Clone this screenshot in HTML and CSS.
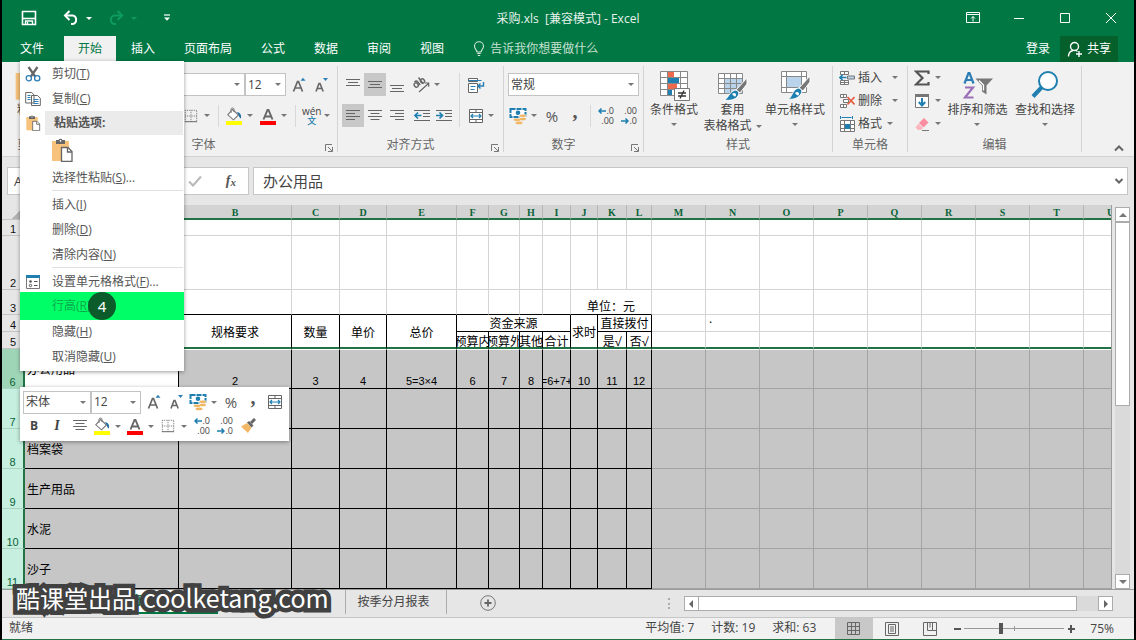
FILE: index.html
```html
<!DOCTYPE html>
<html lang="zh-CN">
<head>
<meta charset="utf-8">
<title>采购.xls [兼容模式] - Excel</title>
<link rel="stylesheet" href="styles.css">
</head>
<body>
<svg class="defs" aria-hidden="true">
  <symbol id="save" viewBox="0 0 16 16"><path d="M1.5 1.5h13v13h-13z" fill="none" stroke="#fff" stroke-width="1.6"/><path d="M1.5 8.5h13" stroke="#fff" stroke-width="1.6"/><path d="M4.5 15v-4h7v4M6.5 12v2.500" fill="none" stroke="#fff" stroke-width="1.4"/></symbol>
  <symbol id="undo" viewBox="0 0 16 16"><path d="M2 5.500h7.500a4.300 4.300 0 0 1 0 8.500H8" fill="none" stroke="currentColor" stroke-width="2"/><path d="M6.500 1 2 5.500 6.500 10" fill="none" stroke="currentColor" stroke-width="2"/></symbol>
  <symbol id="redo" viewBox="0 0 16 16"><path d="M14 5.500H6.500a4.300 4.300 0 0 0 0 8.500H8" fill="none" stroke="currentColor" stroke-width="2"/><path d="M9.500 1 14 5.500 9.500 10" fill="none" stroke="currentColor" stroke-width="2"/></symbol>
  <symbol id="custom" viewBox="0 0 8 8"><path d="M1 1h6" stroke="#fff" stroke-width="1.2"/><path d="M1 3.500h6L4 6.800z" fill="#fff"/></symbol>
  <symbol id="ribbonopt" viewBox="0 0 14 12"><path d="M.5.5h13v10H.5zM.5 2.500h13M7 9.500v-5M5 6.500l2-2 2 2" fill="none" stroke="#fff"/></symbol>
  <symbol id="min" viewBox="0 0 12 12"><path d="M1 6.500h10" stroke="#fff"/></symbol>
  <symbol id="max" viewBox="0 0 12 12"><path d="M1.500 1.500h9v9h-9z" fill="none" stroke="#fff"/></symbol>
  <symbol id="close" viewBox="0 0 12 12"><path d="m1 1 10 10M11 1 1 11" stroke="#fff"/></symbol>
  <symbol id="bulb" viewBox="0 0 12 16"><path d="M4 11c0-2.200-2.500-2.800-2.500-5.800a4.500 4.500 0 0 1 9 0C10.500 8.200 8 8.800 8 11zM4.300 12.500h3.400M4.800 14.500h2.400" fill="none" stroke="#d5eadd" stroke-width="1.100"/></symbol>
  <symbol id="person" viewBox="0 0 16 16"><circle cx="7.500" cy="5.500" r="4" fill="none" stroke="#fff" stroke-width="1.400"/><path d="M1.500 15.500c0-3.500 2-5.500 4.500-6M9 9.500l1.500 1M12 10v6M9 13h6" fill="none" stroke="#fff" stroke-width="1.400"/></symbol>
  <symbol id="paste" viewBox="0 0 22 24"><path d="M1 3h17v20H1z" fill="#f7c27c"/><path d="M5 2h2.500a2.300 2.300 0 0 1 4 0H14v4H5z" fill="#666"/><circle cx="9.500" cy="2.800" r=".9" fill="#fff"/><path d="M10.500 9.500h6.500l4 4v10H10.500z" fill="#fff" stroke="#666" stroke-width="1.300"/><path d="M16.500 9.500v4.500H21" fill="none" stroke="#666" stroke-width="1.300"/></symbol>
  <symbol id="cut" viewBox="0 0 16 16"><path d="M3.500 1 10.500 11M12.500 1 5.500 11" stroke="#666" stroke-width="2.200"/><circle cx="3.800" cy="12.300" r="2.600" fill="#fff" stroke="#2b7db5" stroke-width="1.300"/><circle cx="12.200" cy="12.300" r="2.600" fill="#fff" stroke="#2b7db5" stroke-width="1.300"/></symbol>
  <symbol id="copy" viewBox="0 0 16 16"><path d="M.700 1.500h6L9 3.800V12H.7zM6.500 4.500h6l2.800 2.800v7.200H6.500z" fill="#fff" stroke="#666"/><path d="M2.500 4.500h3M2.500 6.500h3M2.500 8.500h3M8.500 8.500h5M8.500 10.500h5M8.500 12.500h5" stroke="#2b7db5"/></symbol>
  <symbol id="fmtcells" viewBox="0 0 16 16"><path d="M1.500 1.500h13v13h-13z" fill="#fff" stroke="#777"/><path d="M1 1h14v3H1z" fill="#1e7fb0"/><path d="M9 7.500h3.500M9 11.500h3.500" stroke="#555"/><circle cx="5.500" cy="7.500" r="1.300" fill="#555"/><circle cx="5.500" cy="11.500" r="1.200" fill="none" stroke="#555"/></symbol>
  <symbol id="grow" viewBox="0 0 16 16"><path d="M1.500 14.500 5.500 4.500h1l4 10M3 11h6" fill="none" stroke="#666" stroke-width="1.700"/><path d="m8.500 3.800 2.500-3 2.500 3z" fill="#2b7db5"/></symbol>
  <symbol id="shrink" viewBox="0 0 16 16"><path d="M2 14.500 5 6.500h1l3.200 8M3.200 11.500h4.600" fill="none" stroke="#666" stroke-width="1.600"/><path d="M9 1h5l-2.500 3z" fill="#2b7db5"/></symbol>
  <symbol id="borders" viewBox="0 0 16 16"><path d="M1.500 1.500h13v13M1.500 1.500v13M8 1.500v13M1.500 8h13" fill="none" stroke="#666" stroke-dasharray="1 1"/><path d="M1 14.500h14" stroke="#555"/></symbol>
  <symbol id="fill" viewBox="0 0 18 18"><path d="m7.500 2.500 6 5.500-5 4.800-5.700-5z" fill="#fff" stroke="#777" stroke-width="1.100"/><path d="M6 6V2.500a1.500 1.500 0 0 1 3 0V5" fill="none" stroke="#777"/><path d="M12 5c3 .5 4.500 2.500 4 6.500-1.200-.5-2-1.500-2.200-3.200z" fill="#1e6da0"/><path d="M1 14h16v4H1z" fill="#ff0"/></symbol>
  <symbol id="fontcolor" viewBox="0 0 18 18"><path d="M4.500 12.500 8.500 3h1l4 9.500M6 9.500h6" fill="none" stroke="#666" stroke-width="1.900"/><path d="M1 14h16v4H1z" fill="#f00"/></symbol>
  <symbol id="altop" viewBox="0 0 14 14"><path d="M0 1.500h14M2 4.500h10M0 7.500h14" stroke="#666"/></symbol>
  <symbol id="almid" viewBox="0 0 14 14"><path d="M0 3.500h14M2 6.500h10M0 9.500h14" stroke="#666"/></symbol>
  <symbol id="albot" viewBox="0 0 14 14"><path d="M0 7.500h14M2 10.500h10M0 13.500h14" stroke="#666"/></symbol>
  <symbol id="left" viewBox="0 0 14 14"><path d="M0 1.500h14M0 4.500h9M0 7.500h14M0 10.500h9" stroke="#666"/></symbol>
  <symbol id="center" viewBox="0 0 14 14"><path d="M0 1.500h14M2.500 4.500h9M0 7.500h14M2.500 10.500h9" stroke="#666"/></symbol>
  <symbol id="right" viewBox="0 0 14 14"><path d="M0 1.500h14M5 4.500h9M0 7.500h14M5 10.500h9" stroke="#666"/></symbol>
  <symbol id="outdent" viewBox="0 0 16 14"><path d="M0 1.500h16M9 4.500h7M9 7.500h7M0 11.500h16" stroke="#666"/><path d="M7.500 6.500H1M4 3.500l-3 3 3 3" fill="none" stroke="#1e7fb0" stroke-width="1.700"/></symbol>
  <symbol id="indent" viewBox="0 0 16 14"><path d="M0 1.500h16M9 4.500h7M9 7.500h7M0 11.500h16" stroke="#666"/><path d="M0 6.500h6.500M3.500 3.500l3 3-3 3" fill="none" stroke="#1e7fb0" stroke-width="1.700"/></symbol>
  <symbol id="orient" viewBox="0 0 18 18"><g fill="none" stroke="#666" stroke-width="1.400"><ellipse cx="4.200" cy="9" rx="1.900" ry="2.300" transform="rotate(-40 4.200 9)"/><path d="M2.500 6c1.500-1.500 2.500-1 3.300 0l2.400 3M6.500 1.500l4.500 6"/><ellipse cx="10.500" cy="5" rx="1.900" ry="2.300" transform="rotate(-40 10.500 5)"/><path d="m7 16 9.500-8.500M13 7h3.700v3.700" stroke-width="1.200"/></g></symbol>
  <symbol id="wrap" viewBox="0 0 18 16"><path d="M1.500 1.500h9v3h-9zM1.500 6.500h9v9h-9z" fill="#fff" stroke="#666"/><path d="M3.500 9.500h5M3.500 12.500h4M1.500 3.500h13" stroke="#2b7db5"/><path d="M16.500 5v4h-5M13.500 6.500l-2.500 2.500 2.500 2.500" fill="none" stroke="#2b7db5" stroke-width="1.400"/></symbol>
  <symbol id="merge" viewBox="0 0 16 16"><path d="M1.500 1.500h13v13h-13zM1.500 4.500h13M1.500 11.500h13M8 1.500v3M8 11.500v3" fill="#fff" stroke="#666"/><path d="M3 8h10M5 6 3 8l2 2M11 6l2 2-2 2" fill="none" stroke="#1e7fb0" stroke-width="1.200"/></symbol>
  <symbol id="money" viewBox="0 0 18 18"><path d="M1.500 2h15v8h-15z" fill="#fff" stroke="#1e7fb0" stroke-width="2" stroke-dasharray="5 1"/><circle cx="9" cy="5.800" r="2.300" fill="#1e7fb0"/><path d="M10.500 7.500h7v4h-7z" fill="#f1f1f1"/><ellipse cx="13.800" cy="8.800" rx="3.200" ry="1.300" fill="#f2b765"/><ellipse cx="13.800" cy="12" rx="3.200" ry="1.300" fill="#f2b765"/><ellipse cx="8" cy="12.800" rx="3.500" ry="1.300" fill="#f2b765"/><ellipse cx="10" cy="15.900" rx="3.500" ry="1.300" fill="#f2b765"/></symbol>
  <symbol id="arrowl" viewBox="0 0 8 6"><path d="M8 3H1M3.500.5 1 3l2.500 2.500" fill="none" stroke="#1e7fb0" stroke-width="1.500"/></symbol>
  <symbol id="arrowr" viewBox="0 0 8 6"><path d="M0 3h7M4.500.5 7 3 4.500 5.500" fill="none" stroke="#1e7fb0" stroke-width="1.500"/></symbol>
  <symbol id="cond" viewBox="0 0 32 32"><path d="M2.500 2.500h27v24h-27zM2.500 8.500h27M2.500 14.500h27M2.500 20.500h27M9.500 2.500v24M22.500 2.500v24" fill="#fff" stroke="#888"/><path d="M10 3h6v5h-6zM10 15h9v5h-9z" fill="#ee6a4c"/><path d="M10 9h11v5H10zM10 21h4v5h-4z" fill="#1e7fb0"/><path d="M16.500 19.500h15v12h-15z" fill="#fff" stroke="#777"/><path d="M20 24h8M20 27h8M26 21.500l-4 8" stroke="#333" stroke-width="1.300"/></symbol>
  <symbol id="tblfmt" viewBox="0 0 32 32"><path d="M2.500 4.500h24v20h-24z" fill="#fff"/><path d="M8 9.500h19v15H8z" fill="#b9d3ea"/><path d="M2.500 4.500h24v20h-24zM2.500 9.500h24M2.500 14.500h24M2.500 19.500h24M8.500 4.500v20M14.500 4.500v20M20.500 4.500v20" fill="none" stroke="#888"/><path d="M31 9v6l-7 9-4-3z" fill="#777" stroke="#fff"/><path d="M19 21c3 0 5 3 3 6-3 4-8 5-14 4 4-1 5-8 11-10z" fill="#1e7fb0" stroke="#fff"/><path d="M16 25c2-2 4-1 4 1s-2 2-4-1z" fill="#fff"/></symbol>
  <symbol id="cellsty" viewBox="0 0 32 32"><path d="M2.500 2.500h25v21h-25zM2.500 7.500h25M2.500 18.500h25M7.500 2.500v21M22.500 2.500v21" fill="#fff" stroke="#888"/><path d="M8 8h14v10H8z" fill="#b9d3ea"/><path d="M31 7v6l-7 9-4-3z" fill="#777" stroke="#fff"/><path d="M19 19c3 0 5 3 3 6-3 4-7 6-13 5 4-1 4-9 10-11z" fill="#1e7fb0" stroke="#fff"/><path d="M16 24c2-2 4-1 4 1s-2 2-4-1z" fill="#fff"/></symbol>
  <symbol id="cins" viewBox="0 0 16 16"><path d="M1.500 1.500h8v3h-8zM5.500 1.500v3M1.500 10.500h8v4h-8zM5.500 10.500v4M1.500 12.500h8" fill="#fff" stroke="#777"/><path d="M8.500 6h7v3h-7z" fill="#b9d3ea" stroke="#777"/><path d="M7.500 7.500H1M3.500 5 1 7.500 3.500 10" fill="none" stroke="#1e7fb0" stroke-width="1.600"/></symbol>
  <symbol id="cdel" viewBox="0 0 16 16"><path d="M1.500 1.500h6v3h-6zM4.500 1.500v3M4.500 6.500h5v3h-5zM1.500 11.500h6v3h-6zM4.500 11.500v3" fill="#fff" stroke="#777"/><path d="m8.500 4 7 7.500M15.500 4l-7 7.500" stroke="#e8593c" stroke-width="1.600"/></symbol>
  <symbol id="cfmt" viewBox="0 0 16 16"><path d="M1.500 4.500h14v11h-14zM1.500 8.500h14M1.500 12.500h14M5.500 4.500v11M11.500 4.500v11" fill="#fff" stroke="#777"/><path d="M6 8h5v5H6z" fill="#1e7fb0"/><path d="M1.500 0v3M13.500 0v3M2.500 1.500h10" stroke="#1e7fb0"/></symbol>
  <symbol id="sigma" viewBox="0 0 16 16"><path d="M14.500 4V1.500H2L8.500 8 2 14.500h12.500V12" fill="none" stroke="#555" stroke-width="2.200"/></symbol>
  <symbol id="filldown" viewBox="0 0 16 16"><path d="M1.500 1.500h13v13h-13z" fill="#fff" stroke="#777"/><path d="M1 1h14v3H1z" fill="#777"/><path d="M8 5v7M4.800 9 8 12.500 11.200 9" fill="none" stroke="#1e7fb0" stroke-width="2"/></symbol>
  <symbol id="eraser" viewBox="0 0 16 16"><path d="m10 2 4.500 4.500-5 5L5 7z" fill="#fa8ea0"/><path d="M4.500 7.500 9 12l-2 2H4l-2.500-2.500z" fill="#fbb6c0"/><path d="M8 14.500h7" stroke="#777"/></symbol>
  <symbol id="sort" viewBox="0 0 32 32"><path d="M3.500 14.500 7.500 4h1l4 10.500M5 11h6" fill="none" stroke="#2b7db5" stroke-width="2.200"/><path d="M4 18.500h8L4 28.500h8.500" fill="none" stroke="#9a6fb8" stroke-width="2.200"/><path d="M14.500 9.500h17.500l-6.500 7v9l-4.500-3v-6z" fill="#777"/><path d="m18 11.500 4.500 4.500v5.500" fill="none" stroke="#fff" stroke-width="1.300"/></symbol>
  <symbol id="find" viewBox="0 0 32 32"><path d="M13 18 4 27.500" stroke="#1e7fb0" stroke-width="4"/><circle cx="19" cy="12" r="9" fill="#fff" stroke="#1e7fb0" stroke-width="2"/></symbol>
  <symbol id="launcher" viewBox="0 0 8 8"><path d="M.5 7V.5H7M3 3l4 4M7.500 3v4.500H3" fill="none" stroke="#777"/></symbol>
  <symbol id="chevup" viewBox="0 0 10 8"><path d="m1 6.500 4-4 4 4" fill="none" stroke="#666" stroke-width="2"/></symbol>
  <symbol id="chevdn" viewBox="0 0 10 8"><path d="m1.500 2 3.500 3.500L8.500 2" fill="none" stroke="#666" stroke-width="2"/></symbol>
  <symbol id="check" viewBox="0 0 14 12"><path d="m1 6.500 4 4 8-9" fill="none" stroke="#bbb" stroke-width="2.200"/></symbol>
  <symbol id="brush" viewBox="0 0 16 16"><path d="M1 8.500 7 5l4.500 4.500L8 15z" fill="#f2b765"/><path d="m7 4.500 2-1.500 4.500 4.500-2 2z" fill="#666"/><path d="m11 5 4-4" stroke="#666" stroke-width="3"/></symbol>
  <symbol id="plus" viewBox="0 0 16 16"><circle cx="8" cy="8" r="7.300" fill="none" stroke="#777"/><path d="M4.500 8h7M8 4.500v7" stroke="#666" stroke-width="1.800"/></symbol>
  <symbol id="vnormal" viewBox="0 0 14 14"><path d="M.5.5h12v12H.5zM.5 4.500h12M.5 8.500h12M4.500.5v12M8.500.5v12" fill="none" stroke="#666"/></symbol>
  <symbol id="vpage" viewBox="0 0 14 14"><path d="M.5.5h13v13H.5zM3.500 2.500h7v9h-7zM5 5h4M5 7h4M5 9h4" fill="none" stroke="#666"/></symbol>
  <symbol id="vbreak" viewBox="0 0 14 14"><path d="M.5.5h13v13H.5zM4.500.5v8h5v-8M9.500 8.500h4M7 .5v5" fill="none" stroke="#666"/></symbol>
</svg>

<div class="app">
  <header class="titlebar">
    <div class="qat">
      <button class="tool" aria-label="保存"><svg class="s16"><use href="#save"/></svg></button>
      <button class="tool undo" aria-label="撤消"><svg class="s16"><use href="#undo"/></svg><i class="caret"></i></button>
      <button class="tool redo" aria-label="恢复"><svg class="s16"><use href="#redo"/></svg><i class="caret"></i></button>
      <button class="tool" aria-label="自定义快速访问工具栏"><svg class="s8"><use href="#custom"/></svg></button>
    </div>
    <h1>采购.xls&nbsp; [兼容模式] - Excel</h1>
    <div class="winctl">
      <button aria-label="功能区显示选项"><svg class="s14"><use href="#ribbonopt"/></svg></button>
      <button aria-label="最小化"><svg class="s12"><use href="#min"/></svg></button>
      <button aria-label="最大化"><svg class="s12"><use href="#max"/></svg></button>
      <button aria-label="关闭"><svg class="s12"><use href="#close"/></svg></button>
    </div>
  </header>

  <nav class="tabs">
    <button class="file">文件</button>
    <button class="active">开始</button>
    <button>插入</button>
    <button>页面布局</button>
    <button>公式</button>
    <button>数据</button>
    <button>审阅</button>
    <button>视图</button>
    <button class="tell"><svg class="bulb"><use href="#bulb"/></svg>告诉我你想要做什么</button>
    <button class="login">登录</button>
    <button class="share"><svg class="s16"><use href="#person"/></svg>共享</button>
  </nav>

  <section class="ribbon">
    <div class="group g-clip">
      <div class="body">
        <button class="big"><svg class="s32"><use href="#paste"/></svg><span>粘贴</span><i class="caret"></i></button>
      </div>
      <div class="label"><span>剪贴板</span><svg class="s8"><use href="#launcher"/></svg></div>
    </div>
    <div class="group g-font">
      <div class="body rows">
        <div class="row end">
          <span class="combo grow"><select aria-label="字体"><option></option></select></span>
          <span class="combo size"><select aria-label="字号"><option>12</option></select></span>
          <button class="ib gapl" aria-label="增大字号"><svg class="s16"><use href="#grow"/></svg></button>
          <button class="ib" aria-label="减小字号"><svg class="s16"><use href="#shrink"/></svg></button>
        </div>
        <div class="row end gap2">
          <button class="split" aria-label="边框"><svg class="s14"><use href="#borders"/></svg><i class="caret"></i></button>
          <i class="sep"></i>
          <button class="split" aria-label="填充颜色"><svg class="s18"><use href="#fill"/></svg><i class="caret"></i></button>
          <button class="split" aria-label="字体颜色"><svg class="s18"><use href="#fontcolor"/></svg><i class="caret"></i></button>
          <i class="sep"></i>
          <button class="split"><span class="wen">wén<b>文</b></span><i class="caret"></i></button>
        </div>
      </div>
      <div class="label"><span>字体</span><svg class="s8"><use href="#launcher"/></svg></div>
    </div>
    <div class="group g-align">
      <div class="body cols">
        <div class="rows">
          <div class="row">
            <button class="ib" aria-label="顶端对齐"><svg class="s14"><use href="#altop"/></svg></button>
            <button class="ib on" aria-label="垂直居中"><svg class="s14"><use href="#almid"/></svg></button>
            <button class="ib" aria-label="底端对齐"><svg class="s14"><use href="#albot"/></svg></button>
            <button class="split gapl" aria-label="方向"><svg class="s18"><use href="#orient"/></svg><i class="caret"></i></button>
          </div>
          <div class="row">
            <button class="ib on" aria-label="左对齐"><svg class="s14"><use href="#left"/></svg></button>
            <button class="ib" aria-label="居中"><svg class="s14"><use href="#center"/></svg></button>
            <button class="ib" aria-label="右对齐"><svg class="s14"><use href="#right"/></svg></button>
            <button class="ib gapl" aria-label="减少缩进量"><svg class="s16"><use href="#outdent"/></svg></button>
            <button class="ib" aria-label="增加缩进量"><svg class="s16"><use href="#indent"/></svg></button>
          </div>
        </div>
        <i class="sep tall"></i>
        <div class="rows">
          <div class="row"><button class="ib" aria-label="自动换行"><svg class="s18"><use href="#wrap"/></svg></button></div>
          <div class="row"><button class="split" aria-label="合并后居中"><svg class="s16"><use href="#merge"/></svg><i class="caret"></i></button></div>
        </div>
      </div>
      <div class="label"><span>对齐方式</span><svg class="s8"><use href="#launcher"/></svg></div>
    </div>
    <div class="group g-num">
      <div class="body rows">
        <div class="row"><span class="combo grow"><select aria-label="数字格式"><option>常规</option></select></span></div>
        <div class="row gap1">
          <button class="split" aria-label="会计数字格式"><svg class="s18"><use href="#money"/></svg><i class="caret"></i></button>
          <button class="ib glyph">%</button>
          <button class="ib comma">,</button>
          <i class="sep"></i>
          <button class="ib dec"><span><svg class="arr"><use href="#arrowl"/></svg>.0</span><span>.00</span></button>
          <button class="ib dec"><span>.00</span><span><svg class="arr"><use href="#arrowr"/></svg>.0</span></button>
        </div>
      </div>
      <div class="label"><span>数字</span><svg class="s8"><use href="#launcher"/></svg></div>
    </div>
    <div class="group g-style">
      <div class="body">
        <button class="big"><svg class="s32"><use href="#cond"/></svg><span>条件格式</span><i class="caret"></i></button>
        <button class="big"><svg class="s32"><use href="#tblfmt"/></svg><span>套用</span><span class="line">表格格式<i class="caret"></i></span></button>
        <button class="big"><svg class="s32"><use href="#cellsty"/></svg><span>单元格样式</span><i class="caret"></i></button>
      </div>
      <div class="label"><span>样式</span></div>
    </div>
    <div class="group g-cell">
      <div class="body list">
        <button><svg class="s16"><use href="#cins"/></svg>插入<i class="caret"></i></button>
        <button><svg class="s16"><use href="#cdel"/></svg>删除<i class="caret"></i></button>
        <button class="tight"><svg class="s16"><use href="#cfmt"/></svg>格式<i class="caret"></i></button>
      </div>
      <div class="label"><span>单元格</span></div>
    </div>
    <div class="group g-edit">
      <div class="body">
        <div class="list">
          <button aria-label="自动求和"><svg class="s16"><use href="#sigma"/></svg><i class="caret"></i></button>
          <button aria-label="填充"><svg class="s16"><use href="#filldown"/></svg><i class="caret"></i></button>
          <button aria-label="清除"><svg class="s16"><use href="#eraser"/></svg><i class="caret"></i></button>
        </div>
        <button class="big"><svg class="s32"><use href="#sort"/></svg><span>排序和筛选</span><i class="caret"></i></button>
        <button class="big"><svg class="s32"><use href="#find"/></svg><span>查找和选择</span><i class="caret"></i></button>
      </div>
      <div class="label"><span>编辑</span></div>
    </div>
    <button class="collapse" aria-label="折叠功能区"><svg><use href="#chevup"/></svg></button>
  </section>

  <section class="formula">
    <input class="name" aria-label="名称框" value="A6">
    <div class="fxbox">
      <button aria-label="输入"><svg><use href="#check"/></svg></button>
      <button class="fx">f<small>x</small></button>
    </div>
    <div class="fbar"><input aria-label="编辑栏" value="办公用品"><button aria-label="展开编辑栏"><svg><use href="#chevdn"/></svg></button></div>
  </section>

  <main class="work">
    <div class="sheet">
      <table>
        <colgroup>
          <col class="c23"><col class="c154"><col class="c113"><col class="c48"><col class="c47"><col class="c70"><col class="c32"><col class="c31"><col class="c23"><col class="c28"><col class="c27"><col class="c29"><col class="c25"><col class="c54"><col class="c54"><col class="c54"><col class="c54"><col class="c54"><col class="c54"><col class="c54"><col class="c54"><col class="c54">
        </colgroup>
        <thead>
          <tr><th class="corner"></th><th>A</th><th>B</th><th>C</th><th>D</th><th>E</th><th>F</th><th>G</th><th>H</th><th>I</th><th>J</th><th>K</th><th>L</th><th>M</th><th>N</th><th>O</th><th>P</th><th>Q</th><th>R</th><th>S</th><th>T</th><th>U</th></tr>
        </thead>
        <tbody>
          <tr class="r1"><th>1</th><td></td><td></td><td></td><td></td><td></td><td></td><td></td><td></td><td></td><td></td><td></td><td></td><td></td><td></td><td></td><td></td><td></td><td></td><td></td><td></td><td></td></tr>
          <tr class="r2"><th>2</th><td></td><td></td><td></td><td></td><td></td><td></td><td></td><td></td><td></td><td></td><td></td><td></td><td></td><td></td><td></td><td></td><td></td><td></td><td></td><td></td><td></td></tr>
          <tr class="r3"><th>3</th><td class="kb"></td><td class="kb"></td><td class="kb"></td><td class="kb"></td><td class="kb"></td><td class="kb"></td><td class="kb"></td><td class="kb"></td><td class="kb"></td><td class="kb unit" colspan="3">单位：元</td><td></td><td></td><td></td><td></td><td></td><td></td><td></td><td></td><td></td></tr>
          <tr class="r4"><th>4</th><td class="k g" rowspan="2"></td><td class="k g" rowspan="2">规格要求</td><td class="k g" rowspan="2">数量</td><td class="k g" rowspan="2">单价</td><td class="k g" rowspan="2">总价</td><td class="k" colspan="4">资金来源</td><td class="k g" rowspan="2">求时</td><td class="k" colspan="2">直接拨付</td><td></td><td class="dot">.</td><td></td><td></td><td></td><td></td><td></td><td></td><td></td></tr>
          <tr class="r5"><th>5</th><td class="k g"><div>预算内</div></td><td class="k g"><div>预算外</div></td><td class="k g"><div>其他</div></td><td class="k g"><div>合计</div></td><td class="k g"><div>是√</div></td><td class="k g"><div>否√</div></td><td class="g"></td><td class="g"></td><td class="g"></td><td class="g"></td><td class="g"></td><td class="g"></td><td class="g"></td><td class="g"></td><td class="g"></td></tr>
          <tr class="sel first"><th>6</th><td class="k a act">办公用品</td><td class="k">2</td><td class="k">3</td><td class="k">4</td><td class="k">5=3×4</td><td class="k">6</td><td class="k">7</td><td class="k">8</td><td class="k"><div>=6+7+</div></td><td class="k">10</td><td class="k">11</td><td class="k">12</td><td></td><td></td><td></td><td></td><td></td><td></td><td></td><td></td><td></td></tr>
          <tr class="sel"><th>7</th><td class="k a"></td><td class="k"></td><td class="k"></td><td class="k"></td><td class="k"></td><td class="k"></td><td class="k"></td><td class="k"></td><td class="k"></td><td class="k"></td><td class="k"></td><td class="k"></td><td></td><td></td><td></td><td></td><td></td><td></td><td></td><td></td><td></td></tr>
          <tr class="sel"><th>8</th><td class="k a">档案袋</td><td class="k"></td><td class="k"></td><td class="k"></td><td class="k"></td><td class="k"></td><td class="k"></td><td class="k"></td><td class="k"></td><td class="k"></td><td class="k"></td><td class="k"></td><td></td><td></td><td></td><td></td><td></td><td></td><td></td><td></td><td></td></tr>
          <tr class="sel"><th>9</th><td class="k a">生产用品</td><td class="k"></td><td class="k"></td><td class="k"></td><td class="k"></td><td class="k"></td><td class="k"></td><td class="k"></td><td class="k"></td><td class="k"></td><td class="k"></td><td class="k"></td><td></td><td></td><td></td><td></td><td></td><td></td><td></td><td></td><td></td></tr>
          <tr class="sel"><th>10</th><td class="k a">水泥</td><td class="k"></td><td class="k"></td><td class="k"></td><td class="k"></td><td class="k"></td><td class="k"></td><td class="k"></td><td class="k"></td><td class="k"></td><td class="k"></td><td class="k"></td><td></td><td></td><td></td><td></td><td></td><td></td><td></td><td></td><td></td></tr>
          <tr class="sel"><th>11</th><td class="k a">沙子</td><td class="k"></td><td class="k"></td><td class="k"></td><td class="k"></td><td class="k"></td><td class="k"></td><td class="k"></td><td class="k"></td><td class="k"></td><td class="k"></td><td class="k"></td><td></td><td></td><td></td><td></td><td></td><td></td><td></td><td></td><td></td></tr>
        </tbody>
      </table>
    </div>
    <div class="vscroll">
      <button aria-label="向上滚动"><i class="tri up"></i></button>
      <div class="vthumb"></div>
      <div class="vrest"></div>
      <button aria-label="向下滚动"><i class="tri down"></i></button>
    </div>
  </main>

  <footer class="sheetbar">
    <div class="sheettabs">
      <span class="more">...</span>
      <button class="cur">政府采购计划表</button>
      <button class="t2">政府采购计划季报</button>
      <button class="t3">按季分月报表</button>
      <button class="add" aria-label="新工作表"><svg class="s16"><use href="#plus"/></svg></button>
      <i class="grip"></i>
    </div>
    <div class="hscroll">
      <button aria-label="向左滚动"><i class="tri lf"></i></button>
      <div class="hthumb"></div>
      <div class="hrest"></div>
      <button aria-label="向右滚动"><i class="tri rt"></i></button>
    </div>
  </footer>

  <footer class="status">
    <span class="ready">就绪</span>
    <span>平均值: 7</span>
    <span>计数: 19</span>
    <span>求和: 63</span>
    <div class="views">
      <button class="on" aria-label="普通"><svg class="s14"><use href="#vnormal"/></svg></button>
      <button aria-label="页面布局视图"><svg class="s14"><use href="#vpage"/></svg></button>
      <button aria-label="分页预览"><svg class="s14"><use href="#vbreak"/></svg></button>
    </div>
    <div class="zoom">
      <button aria-label="缩小"><i class="hbar"></i></button>
      <input type="range" min="0" max="100" value="36" aria-label="缩放">
      <button aria-label="放大"><i class="hbar"></i><i class="vbar"></i></button>
      <span>75%</span>
    </div>
  </footer>

  <div class="menu" role="menu">
    <button role="menuitem"><svg class="s16"><use href="#cut"/></svg><span>剪切(<u>T</u>)</span></button>
    <button role="menuitem"><svg class="s16"><use href="#copy"/></svg><span>复制(<u>C</u>)</span></button>
    <div class="head"><svg class="s16"><use href="#paste"/></svg><b>粘贴选项:</b></div>
    <button class="opt" aria-label="粘贴"><svg><use href="#paste"/></svg></button>
    <button role="menuitem"><span>选择性粘贴(<u>S</u>)...</span></button>
    <hr>
    <button role="menuitem"><span>插入(<u>I</u>)</span></button>
    <button role="menuitem"><span>删除(<u>D</u>)</span></button>
    <button role="menuitem"><span>清除内容(<u>N</u>)</span></button>
    <hr>
    <button role="menuitem"><svg class="s16"><use href="#fmtcells"/></svg><span>设置单元格格式(<u>F</u>)...</span></button>
    <button role="menuitem" class="hot"><span>行高(<u>R</u>)...</span><b class="step">4</b></button>
    <button role="menuitem"><span>隐藏(<u>H</u>)</span></button>
    <button role="menuitem"><span>取消隐藏(<u>U</u>)</span></button>
  </div>

  <div class="mini">
    <div class="row">
      <span class="combo mfont"><select aria-label="浮动工具栏字体"><option>宋体</option></select></span>
      <span class="combo msize"><select aria-label="浮动工具栏字号"><option>12</option></select></span>
      <button class="ib gapl" aria-label="增大字号"><svg class="s16"><use href="#grow"/></svg></button>
      <button class="ib" aria-label="减小字号"><svg class="s16"><use href="#shrink"/></svg></button>
      <button class="split" aria-label="会计数字格式"><svg class="s18"><use href="#money"/></svg><i class="caret"></i></button>
      <button class="ib glyph">%</button>
      <button class="ib comma">,</button>
      <button class="ib" aria-label="合并后居中"><svg class="s16"><use href="#merge"/></svg></button>
    </div>
    <div class="row gap1">
      <button class="ib"><b>B</b></button>
      <button class="ib ital">I</button>
      <button class="ib" aria-label="居中"><svg class="s14"><use href="#center"/></svg></button>
      <button class="split" aria-label="填充颜色"><svg class="s18"><use href="#fill"/></svg><i class="caret"></i></button>
      <button class="split" aria-label="字体颜色"><svg class="s18"><use href="#fontcolor"/></svg><i class="caret"></i></button>
      <button class="split" aria-label="边框"><svg class="s14"><use href="#borders"/></svg><i class="caret"></i></button>
      <button class="ib dec"><span><svg class="arr"><use href="#arrowl"/></svg>.0</span><span>.00</span></button>
      <button class="ib dec"><span>.00</span><span><svg class="arr"><use href="#arrowr"/></svg>.0</span></button>
      <button class="ib" aria-label="格式刷"><svg class="s16"><use href="#brush"/></svg></button>
    </div>
  </div>

  <div class="mark"><span>酷课堂出品</span> <span class="site">coolketang.com</span></div>
</div>
</body>
</html>
```

FILE: styles.css
```css
* { box-sizing: border-box; }
body { margin: 0; background: #000; font: 12px/16px "Open Sans", "Noto Sans CJK SC", sans-serif; color: #444; }
button, input, select { font: inherit; color: inherit; margin: 0; padding: 0; border: 0; border-radius: 0; background: none; }
button { display: flex; align-items: center; justify-content: center; white-space: nowrap; }
svg { flex: none; display: block; }
i { font-style: normal; flex: none; }
.defs { position: absolute; width: 0; height: 0; }
.app { position: relative; display: flex; flex-direction: column; height: 100vh; margin: 0 2px; overflow: hidden; background: #e6e6e6; border-bottom: 1px solid #217346; }
.s8 { width: 8px; height: 8px; }
.s12 { width: 12px; height: 12px; }
.s14 { width: 14px; height: 14px; }
.s16 { width: 16px; height: 16px; }
.s18 { width: 18px; height: 18px; }
.s32 { width: 32px; height: 32px; }
.caret { width: 0; height: 0; border: 3px solid transparent; border-top-color: currentColor; border-bottom: 0; }
.ribbon .caret, .mini .caret { color: #777; }

/* title bar */
.titlebar { display: grid; grid-template-columns: 1fr auto 1fr; align-items: center; height: 36px; background: #017744; color: #fff; flex: none; }
.qat { display: flex; align-items: center; padding-left: 19px; gap: 16px; }
.tool { gap: 7px; height: 24px; }
.undo { margin-left: 10px; }
.redo { color: #0e9a60; }
.tool:last-child { margin-left: 10px; }
h1 { margin: 2px 0 0; font: inherit; color: #e6f3ec; }
.winctl { display: flex; justify-content: flex-end; }
.winctl button { width: 46px; height: 32px; }

/* ribbon tabs */
.tabs { display: flex; gap: 1px; height: 26px; background: #017744; color: #fff; flex: none; }
.tabs button { padding: 0 14px; }
.tabs .file { padding: 0 19px 0 18px; }
.tabs .active { background: #f1f1f1; color: #017744; }
.tabs .tell { padding: 0 14px; gap: 5px; color: #c5e0d1; }
.bulb { width: 12px; height: 16px; }
.tabs .login { margin-left: auto; padding: 0 9px; }
.tabs .share { background: #05602b; margin-right: 16px; padding: 0 7px; gap: 4px; }

/* ribbon */
.ribbon { display: flex; height: 95px; flex: none; background: #f1f1f1; border-bottom: 1px solid #d2d2d2; padding: 4px 0; }
.group { display: flex; flex-direction: column; border-right: 1px solid #d4d4d4; }
.group .body { display: flex; flex: 1; padding: 0 4px; }
.group .label { display: flex; align-items: center; height: 14px; color: #666; }
.label span { flex: 1; text-align: center; }
.label svg { margin: 6px 4px 0 8px; }
.g-clip { width: 88px; }
.g-clip .big { margin-left: 7px; }
.g-font { width: 248px; }
.g-align { width: 166px; }
.g-num { width: 140px; }
.g-style { width: 189px; }
.g-cell { width: 75px; }
.g-edit { width: 174px; }
.ribbon .rows { display: flex; flex-direction: column; gap: 8px; padding-top: 7px; }
.row { display: flex; align-items: center; height: 23px; }
.end { justify-content: flex-end; }
.gap1 { gap: 1px; }
.gap2 { gap: 2px; }
.gapl { margin-left: 3px; }
.ib { width: 22px; height: 23px; flex: none; }
.on { background: #c8c8c8; }
.split { width: 32px; height: 23px; flex: none; justify-content: space-between; padding: 0 3px 0 1px; }
.split .s14, .split .s16 { margin-left: 2px; }
.sep { width: 1px; height: 22px; background: #d8d8d8; margin: 0 3px; }
.sep.tall { height: 54px; margin: 7px 5px 0 4px; }
.combo { position: relative; display: flex; height: 23px; background: #fff; border: 1px solid #c3c3c3; }
.combo::after { content: ""; position: absolute; right: 4px; top: 9px; border: 3px solid transparent; border-top-color: #777; border-bottom: 0; pointer-events: none; }
.combo select { appearance: none; width: 100%; padding: 0 2px; }
.grow { flex: 1; }
.size { width: 41px; }
.wen { display: flex; flex-direction: column; align-items: center; font-size: 10px; line-height: 10px; color: #444; }
.wen b { font-weight: 500; color: #1e7fb0; font-size: 9px; }
.glyph { font-size: 15px; color: #555; }
.comma { font: bold 20px/10px "Liberation Serif", serif; padding-bottom: 10px; color: #555; }
.dec { flex-direction: column; align-items: flex-end; justify-content: center; font: 9px/10px "Open Sans", sans-serif; padding-right: 3px; }
.dec span { display: flex; align-items: center; }
.arr { width: 8px; height: 6px; }
.big { flex-direction: column; justify-content: flex-start; padding-top: 3px; min-width: 52px; }
.big .s32 { margin-bottom: 1px; }
.g-clip .big { min-width: 28px; }
.big > .caret { margin-top: 5px; }
.line { display: flex; align-items: center; gap: 4px; }
.g-style .body, .g-edit .body { justify-content: space-between; }
.group.g-style .body { padding: 0 7px 0 4px; }
.group.g-edit .body { padding-right: 6px; }
.list { display: flex; flex-direction: column; }
.group .body.list { flex-direction: column; }
.list button { height: 23px; gap: 3px; justify-content: flex-start; padding-left: 2px; color: #444; }
.list .caret { margin-left: 7px; }
.list .tight .caret { margin-left: 2px; }
.g-edit .list .caret { margin-left: 2px; }
.g-edit .list { width: 28px; }
.collapse { margin: auto 10px 0 auto; }
.collapse svg { width: 10px; height: 8px; }

/* formula bar */
.formula { display: flex; gap: 4px; padding: 10px 6px 10px 5px; height: 48px; flex: none; }
.name, .fxbox, .fbar { background: #fff; border: 1px solid #c6c6c6; height: 28px; }
.name { width: 120px; padding-left: 6px; font-size: 13px; }
.fxbox { display: flex; width: 118px; justify-content: flex-end; gap: 24px; padding-right: 12px; }
.fxbox svg { width: 14px; height: 12px; }
.fx { font: italic bold 14px/16px "Liberation Serif", serif; color: #555; }
.fx small { font-size: 11px; padding-top: 2px; }
.fbar { display: flex; flex: 1; }
.fbar input { flex: 1; min-width: 0; padding-left: 9px; font-size: 15px; }
.fbar svg { width: 10px; height: 8px; margin-right: 3px; }

/* worksheet */
.work { display: flex; flex: 1; min-height: 0; }
.sheet { flex: 1; min-width: 0; overflow: hidden; border-right: 1px solid #9c9c9c; background: #fff; }
table { table-layout: fixed; width: 1136px; min-width: 100%; border-spacing: 0; line-height: 14px; }
.c23 { width: 23px; } .c154 { width: 154px; } .c113 { width: 113px; } .c48 { width: 48px; } .c47 { width: 47px; } .c70 { width: 70px; } .c32 { width: 32px; } .c31 { width: 31px; } .c28 { width: 28px; } .c27 { width: 27px; } .c29 { width: 29px; } .c25 { width: 25px; } .c54 { width: 54px; }
th, td { padding: 0; overflow: hidden; white-space: nowrap; }
thead tr { height: 15px; }
thead th { background: #d3d3d3; border-right: 1px solid #b5b5b5; border-bottom: 2px solid #217346; padding-top: 3px; font: bold 10px/10px "Liberation Serif", serif; color: #0a6339; }
thead .corner { background: linear-gradient(135deg, #e6e6e6 65%, #b4b4b4 65%); border-bottom: 1px solid #c4c4c4; }
tbody th { background: #e6e6e6; border-bottom: 1px solid #c4c4c4; border-right: 1px solid #c4c4c4; font: 11px/12px "Liberation Sans", sans-serif; color: #111; vertical-align: bottom; }
td { border-right: 1px solid #d4d4d4; border-bottom: 1px solid #d4d4d4; text-align: center; color: #000; }
.k { border-color: #000; }
.kb { border-bottom-color: #000; }
.r1 { height: 16px; }
.r2 { height: 54px; }
.r3 { height: 25px; }
.r4, .r5 { height: 17px; }
td.unit { vertical-align: bottom; line-height: 14px; }
.r4 .k { padding-top: 2px; }
.r4 .k[rowspan] { padding-top: 3px; }
td.g { border-bottom: 2px solid #217346; }
td div { display: flex; justify-content: center; overflow: hidden; }
.r5 div { height: 15px; line-height: 20px; }
.r5 th { line-height: 11px; }
td.dot { text-align: left; padding-left: 3px; line-height: 8px; vertical-align: top; }
.sel { height: 40px; }
.sel td { background: #c6c6c6; border-right-color: #a3a3a3; border-bottom-color: #a3a3a3; vertical-align: bottom; font-family: "Liberation Sans", "Noto Sans CJK SC", sans-serif; font-size: 11px; }
.sel .k { border-right-color: #000; border-bottom-color: #000; }
.first td { border-top: 1px solid #fff; }
.sel .a { text-align: left; vertical-align: middle; font-size: 12px; padding: 2px 0 0 2px; }
.sel .act { background: #fff; }
.sel th { background: #c6efdf; color: #0a6339; border-right: 2px solid #217346; border-bottom-color: #a9d3c1; }
.sel.first th { background: #9fd5b7; }
.vscroll { display: flex; flex-direction: column; width: 22px; padding: 2px 4px 0 3px; background: #e6e6e6; }
.vscroll button, .hscroll button { background: #fff; border: 1px solid #ababab; height: 15px; width: 15px; flex: none; }
.vthumb { flex: 184; background: #fff; border: 1px solid #ababab; }
.vrest { flex: 169; background: #dadada; }
.tri { width: 0; height: 0; border: 4px solid transparent; }
.up { border-bottom-color: #777; border-top: 0; }
.down { border-top-color: #777; border-bottom: 0; }
.lf { border-right-color: #666; border-left: 0; }
.rt { border-left-color: #666; border-right: 0; }

/* sheet tabs */
.sheetbar { display: flex; height: 28px; flex: none; border-top: 1px solid #9c9c9c; }
.sheettabs { display: flex; flex: 696 1 0; min-width: 0; align-items: flex-start; }
.sheettabs button { height: 24px; }
.more { width: 100px; padding: 4px 7px 0 0; text-align: right; }
.sheettabs .cur { width: 116px; background: #fff; color: #017744; font-weight: 700; border-bottom: 2px solid #017744; }
.sheettabs .t2 { width: 128px; border-right: 1px solid #ababab; }
.sheettabs .t3 { width: 101px; border-right: 1px solid #ababab; padding-right: 5px; }
.sheettabs .add { margin: 1px 0 0 33px; }
.grip { margin: 8px 14px 0 auto; height: 11px; border-left: 2px dotted #aaa; }
.hscroll { display: flex; flex: 438 1 0; padding: 6px 21px 0 0; }
.hthumb { flex: 365; height: 15px; background: #fff; border: 1px solid #ababab; border-left: 0; }
.hrest { flex: 20; height: 15px; background: #dadada; }

/* status bar */
.status { display: flex; align-items: stretch; height: 22px; flex: none; background: #f1f1f1; border-top: 1px solid #c6c6c6; line-height: 19px; }
.status > span { margin-right: 17px; }
.status .ready { padding-left: 7px; margin-right: auto; }
.views { display: flex; margin-left: 2px; }
.views button { width: 38px; }
.zoom { display: flex; align-items: center; gap: 2px; padding: 0 20px 0 3px; }
.zoom span { margin-left: 12px; }
.zoom button { position: relative; width: 10px; height: 16px; }
.hbar { width: 7px; height: 2px; background: #555; }
.vbar { position: absolute; width: 2px; height: 8px; background: #555; }
.zoom input { appearance: none; width: 100px; height: 12px; background: linear-gradient(#999, #999) center / 100% 1px no-repeat, linear-gradient(#999, #999) center / 1px 5px no-repeat; }
.zoom input::-webkit-slider-thumb { appearance: none; width: 4px; height: 11px; background: #555; }

/* context menu */
.menu { position: absolute; left: 18px; top: 61px; width: 164px; padding-bottom: 2px; background: #fff; box-shadow: 0 1px 4px #0006; color: #555; }
.menu button { position: relative; width: 100%; height: 25px; padding-left: 32px; justify-content: flex-start; }
.menu button > svg { position: absolute; left: 5px; }
.menu .head { display: flex; height: 24px; align-items: center; padding-left: 5px; gap: 4px; }
.head b { flex: 1; background: #ebebeb; line-height: 24px; padding-left: 9px; margin-right: 1px; }
.menu .opt { height: 30px; padding-left: 31px; }
.opt svg { width: 22px; height: 24px; }
.menu .opt > svg { position: static; }
.menu hr { margin: 0 1px 1px 32px; border: 0; border-top: 1px solid #e0e0e0; }
.menu .hot { height: 28px; margin: -2px 0 -1px; background: #00ff66; color: #0aa94c; }
.step { position: absolute; left: 68px; top: 0; width: 28px; border-radius: 50%; background: #0b5c2a; color: #fff; font: 15px/28px "Noto Sans", sans-serif; text-align: center; }

/* mini toolbar */
.mini { position: absolute; left: 18px; top: 387px; width: 269px; padding: 3px; background: #fff; box-shadow: 0 1px 4px #0006; }
.mini .row { height: 24px; }
.mfont { width: 68px; }
.msize { width: 50px; }
.ital { font: italic bold 14px/16px "Liberation Serif", serif; }

.mark { position: absolute; left: 14px; bottom: 24px; display: flex; align-items: baseline; gap: 7px; font: 24px/34px "Noto Sans CJK SC", sans-serif; color: #fff; -webkit-text-stroke: 9px #414141; stroke-linejoin: round; paint-order: stroke fill; white-space: nowrap; }
.site { font-size: 25px; }
```
